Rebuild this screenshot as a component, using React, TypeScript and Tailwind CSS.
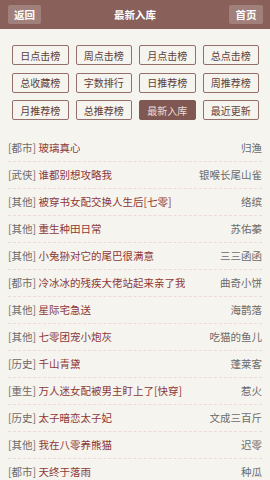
const tabs = [
  '日点击榜', '周点击榜', '月点击榜', '总点击榜',
  '总收藏榜', '字数排行', '日推荐榜', '周推荐榜',
  '月推荐榜', '总推荐榜', '最新入库', '最近更新',
];

const books = [
  { cat: '都市', title: '玻璃真心', author: '归渔' },
  { cat: '武侠', title: '谁都别想攻略我', author: '银喉长尾山雀' },
  { cat: '其他', title: '被穿书女配交换人生后[七零]', author: '络缤' },
  { cat: '其他', title: '重生种田日常', author: '苏佑蓁' },
  { cat: '其他', title: '小兔狲对它的尾巴很满意', author: '三三函函' },
  { cat: '都市', title: '冷冰冰的残疾大佬站起来亲了我', author: '曲奇小饼' },
  { cat: '其他', title: '星际宅急送', author: '海鹊落' },
  { cat: '其他', title: '七零团宠小炮灰', author: '吃猫的鱼儿' },
  { cat: '历史', title: '千山青黛', author: '蓬莱客' },
  { cat: '重生', title: '万人迷女配被男主盯上了[快穿]', author: '惹火' },
  { cat: '历史', title: '太子暗恋太子妃', author: '文成三百斤' },
  { cat: '其他', title: '我在八零养熊猫', author: '迟零' },
  { cat: '都市', title: '天终于落雨', author: '种瓜' },
];

export default function App() {
  return (
    <div
      className="h-[480px] w-[270px] overflow-hidden bg-[#f6f4ee]"
      style={{ fontFamily: '"Noto Sans CJK SC", "Noto Sans", sans-serif' }}
    >
      <header className="flex h-[29px] items-center justify-between bg-[#8a605b] pl-2 pr-[7px]">
        <button className="flex h-[19px] w-[33px] items-center justify-center rounded-[2px] bg-white/20 text-[10.5px] font-bold text-white">
          返回
        </button>
        <h1 className="text-[10.5px] font-bold text-white">最新入库</h1>
        <button className="flex h-[19px] w-[34px] items-center justify-center rounded-[2px] bg-white/20 text-[10.5px] font-bold text-white">
          首页
        </button>
      </header>

      <div className="grid grid-cols-4 gap-x-[7px] gap-y-[7.5px] pl-3 pr-[11px] pt-4">
        {tabs.map((t) => (
          <div
            key={t}
            className={`flex h-5 items-center justify-center rounded-[2px] border text-[10px] ${
              t === '最新入库'
                ? 'border-[#7f5853] bg-[#7f5853] text-[#eddcd9]'
                : 'border-[#93706c] text-[#5c3f3c]'
            }`}
          >
            {t}
          </div>
        ))}
      </div>

      <ul className="mt-[14.5px] px-2">
        {books.map((b, i) => (
          <li
            key={i}
            className="flex h-[27px] items-center justify-between border-b border-dashed border-[#efd8d8] text-[10.5px]"
          >
            <span className="truncate">
              <span className="text-[#6b6b6b]">[{b.cat}]</span>{' '}
              <span className="text-[#8c3838]">{b.title}</span>
            </span>
            <span className="shrink-0 pl-2 text-[#6b6b6b]">{b.author}</span>
          </li>
        ))}
      </ul>
    </div>
  );
}
